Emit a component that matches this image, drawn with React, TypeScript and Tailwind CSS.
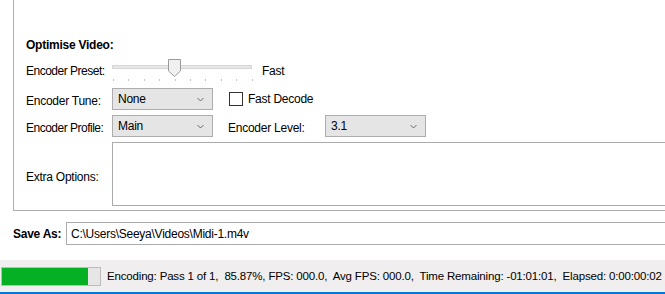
import React from "react";

const Chevron = () => (
  <svg width="7" height="5" viewBox="0 0 7 5" className="shrink-0">
    <polyline points="0.5,1 3.5,4 6.5,1" fill="none" stroke="#6b6b6b" strokeWidth="1" />
  </svg>
);

const Combo = ({ value, w }: { value: string; w: string }) => (
  <div className={`${w} h-[22px] shrink-0 border border-[#adadad] bg-[#e5e5e5] flex items-center justify-between pl-[5px] pr-[8px]`}>
    <span>{value}</span>
    <Chevron />
  </div>
);

export default function App() {
  const ticks = Array.from({ length: 10 }, (_, i) => i);
  return (
    <div
      className="w-[665px] h-[294px] bg-white overflow-hidden text-[12px] leading-[16px] tracking-[-0.25px] text-black flex flex-col whitespace-nowrap"
      style={{ fontFamily: '"Liberation Sans", Arial, sans-serif' }}
    >
      <div className="ml-[13px] h-[211px] border-l border-b border-[#adadad] pl-[12px] pt-[37px] flex flex-col shrink-0">
        <div className="h-[16px] font-bold">Optimise Video:</div>
        <div className="mt-[5px] h-[24px] flex items-center">
          <div className="w-[86px] shrink-0 pt-[2px] tracking-[-0.5px]">Encoder Preset:</div>
          <div className="relative w-[140px] h-[24px] shrink-0">
            <div className="absolute left-0 right-0 top-[7px] h-[4px] border border-[#d6d6d6] bg-[#e7e7e7]" />
            <svg className="absolute left-[56px] top-[1px]" width="13" height="18" viewBox="0 0 13 18">
              <polygon points="0.5,0.5 12.5,0.5 12.5,12 6.5,17.5 0.5,12" fill="#f0f0f0" stroke="#9a9a9a" strokeWidth="1" />
            </svg>
            {ticks.map((i) => (
              <div
                key={i}
                className="absolute top-[21px] w-px h-[2px] bg-[#c4c4c4]"
                style={{ left: `${1 + i * 15.4}px` }}
              />
            ))}
          </div>
          <div className="ml-[10px] pt-[2px]">Fast</div>
        </div>
        <div className="mt-[6px] h-[22px] flex items-center">
          <div className="w-[86px] shrink-0 pt-[3px]">Encoder Tune:</div>
          <Combo value="None" w="w-[101px]" />
          <div className="ml-[16px] w-[14px] h-[14px] shrink-0 border border-[#333333] bg-white" />
          <div className="ml-[5px]">Fast Decode</div>
        </div>
        <div className="mt-[5px] h-[22px] flex items-center">
          <div className="w-[86px] shrink-0 pt-[3px] tracking-[-0.5px]">Encoder Profile:</div>
          <Combo value="Main" w="w-[101px]" />
          <div className="ml-[15px] w-[97px] shrink-0 pt-[3px]">Encoder Level:</div>
          <Combo value="3.1" w="w-[101px]" />
        </div>
        <div className="mt-[5px] h-[64px] flex items-center">
          <div className="w-[86px] pt-[6px] shrink-0">Extra Options:</div>
          <div className="h-[64px] w-[600px] shrink-0 border border-[#ababab] bg-white" />
        </div>
      </div>
      <div className="mt-[11px] h-[23px] flex items-center shrink-0">
        <div className="ml-[13px] w-[53px] shrink-0 font-bold">Save As:</div>
        <div className="h-[23px] w-[620px] shrink-0 border border-[#ababab] flex items-center pl-[4px]">
          C:\Users\Seeya\Videos\Midi-1.m4v
        </div>
      </div>
      <div className="mt-[15px] h-[32px] bg-[#f0eeee] flex items-center shrink-0">
        <div className="ml-[1px] w-[100px] h-[19px] shrink-0 border border-[#bcbcbc] bg-[#e6e6e6] flex">
          <div className="w-[86px] h-full bg-[#06b025]" />
        </div>
        <div className="ml-[6px] whitespace-pre text-[11.5px] tracking-[-0.17px]">
          {"Encoding: Pass 1 of 1,  85.87%, FPS: 000.0,  Avg FPS: 000.0,  Time Remaining: -01:01:01,  Elapsed: 0:00:00:02"}
        </div>
      </div>
      <div className="h-[2px] bg-[#0078d7] shrink-0" />
    </div>
  );
}
